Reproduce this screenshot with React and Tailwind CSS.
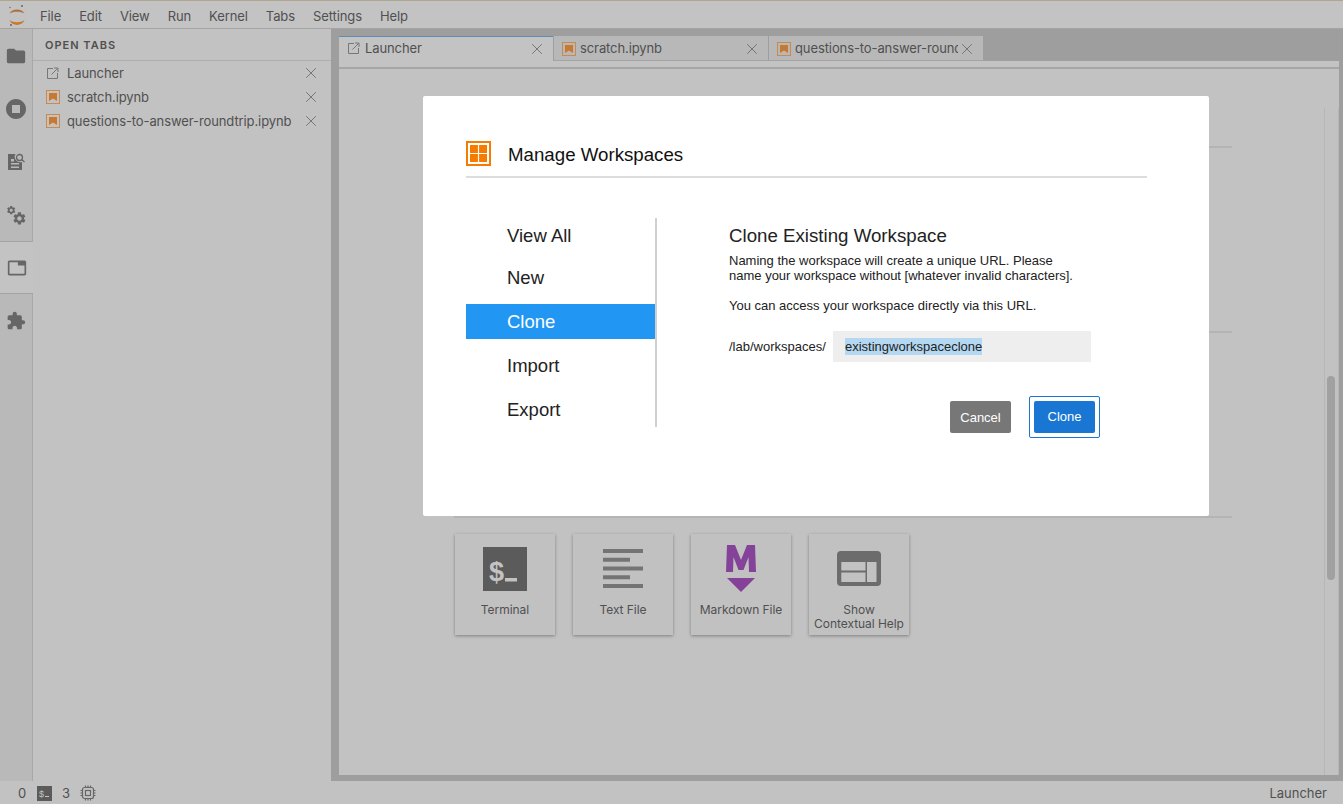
import { X } from 'lucide-react';

const UI = { fontFamily: 'Inter, "Liberation Sans", sans-serif' };

const menus = ['File', 'Edit', 'View', 'Run', 'Kernel', 'Tabs', 'Settings', 'Help'];

const Icon = ({ d, size = 24, className = '' }) => (
  <svg width={size} height={size} viewBox="0 0 24 24" fill="currentColor" className={className}>
    <path d={d} />
  </svg>
);

const gear = 'M19.14 12.94c.04-.3.06-.61.06-.94 0-.32-.02-.64-.07-.94l2.03-1.58a.49.49 0 0 0 .12-.61l-1.92-3.32a.488.488 0 0 0-.59-.22l-2.39.96c-.5-.38-1.03-.7-1.62-.94l-.36-2.54a.484.484 0 0 0-.48-.41h-3.84c-.24 0-.43.17-.47.41l-.36 2.54c-.59.24-1.13.57-1.62.94l-2.39-.96c-.22-.08-.47 0-.59.22L2.74 8.87c-.12.21-.08.47.12.61l2.03 1.58c-.05.3-.09.63-.09.94s.02.64.07.94l-2.03 1.58a.49.49 0 0 0-.12.61l1.92 3.32c.12.22.37.29.59.22l2.39-.96c.5.38 1.03.7 1.62.94l.36 2.54c.05.24.24.41.48.41h3.84c.24 0 .44-.17.47-.41l.36-2.54c.59-.24 1.13-.56 1.62-.94l2.39.96c.22.08.47 0 .59-.22l1.92-3.32c.12-.22.07-.47-.12-.61l-2.01-1.58zM12 15.6c-1.98 0-3.6-1.62-3.6-3.6s1.62-3.6 3.6-3.6 3.6 1.62 3.6 3.6-1.62 3.6-3.6 3.6z';

const JupyterLogo = () => (
  <svg width="20" height="24" viewBox="0 0 20 24">
    <path d="M3.5 10.5C6 5 16 5 18.5 10.5C15 8 7 8 3.5 10.5Z" fill="#b0703a" />
    <path d="M3.5 17C6 23.5 16 23.5 18.5 17C15 20 7 20 3.5 17Z" fill="#c9782f" />
    <circle cx="16" cy="3" r="1" fill="#666" />
    <circle cx="4" cy="4.5" r="0.7" fill="#666" />
    <circle cx="5" cy="22" r="1" fill="#666" />
  </svg>
);

const NotebookIcon = () => (
  <svg width="14" height="14" viewBox="0 0 14 14">
    <rect x="0.5" y="0.5" width="13" height="13" fill="none" stroke="#c98a4f" />
    <path d="M3 3H11V11L7 8.5L3 11Z" fill="#c8782f" />
  </svg>
);

const LauncherIcon = () => (
  <svg width="13" height="13" viewBox="0 0 13 13" fill="none" stroke="#777" strokeWidth="1">
    <path d="M7 1.5H1.5V11.5H11.5V6" />
    <path d="M5.5 7.5L11.5 1.5M8 1H12V5" />
  </svg>
);

const SideIcon = ({ children, active }) => (
  <div
    className={`h-[53px] flex items-center justify-center text-[#666] ${
      active ? 'bg-[#c3c3c3] border-y border-[#a4a4a4] w-[33px]' : 'w-[32px]'
    }`}
  >
    {children}
  </div>
);

const OpenTab = ({ icon, label }) => (
  <div className="h-6 flex items-center pl-[13px] pr-[11px]">
    <span className="w-[21px] flex items-center">{icon}</span>
    <span className="flex-1 pt-[2px] text-[13px] tracking-[-0.1px] text-[#505050] truncate">{label}</span>
    <X size={18} strokeWidth={1.1} className="text-[#666]" />
  </div>
);

const DocTab = ({ icon, label, active }) => (
  <div
    className={`w-[214px] shrink-0 flex items-center pl-2 pr-[7px] mr-px ${
      active ? 'h-[26px] pb-[2px] bg-[#c3c3c3] border-t border-[#5d8db5]' : 'h-[25px] pt-[2px] bg-[#b8b8b8] border-b border-[#a4a4a4]'
    }`}
  >
    <span className="w-[18px] flex items-center">{icon}</span>
    <span className="flex-1 text-[13px] tracking-[-0.1px] text-[#505050] overflow-hidden whitespace-nowrap">{label}</span>
    <X size={18} strokeWidth={1.1} className="text-[#666] shrink-0" />
  </div>
);

const LauncherCard = ({ label, children }) => (
  <div className="w-[100px] h-[101px] bg-[#c1c1c1] shadow-[0_1px_3px_rgba(0,0,0,0.35)] flex flex-col items-center">
    <div className="h-[66px] pt-[3px] flex items-center justify-center">{children}</div>
    <div className="text-[12px] leading-[14px] tracking-[-0.05px] text-[#505050] text-center mt-[3px] whitespace-nowrap">{label}</div>
  </div>
);

const navItems = [
  { label: 'View All', cls: 'h-[36px] mb-[5px]' },
  { label: 'New', cls: 'h-[38px] mb-[7px]' },
  { label: 'Clone', cls: 'h-[35px] mb-[9px] bg-[#2196f3] text-white' },
  { label: 'Import', cls: 'h-[35px] mb-[9px]' },
  { label: 'Export', cls: 'h-[35px]' },
];

const WorkspaceModal = () => (
  <div
    className="absolute left-[423px] top-[96px] w-[786px] h-[420px] bg-white rounded-[2px] pl-[43px] pr-[62px] pt-[45px]"
    style={{ fontFamily: '"Liberation Sans", Arial, sans-serif' }}
  >
    <div className="h-[37px] border-b-2 border-[#dddddd] flex items-start">
      <svg width="25" height="25" viewBox="0 0 25 25" className="mr-[17px]">
        <rect x="1" y="1" width="23" height="23" fill="none" stroke="#f57c00" strokeWidth="2" />
        <path d="M4 4H11.9V11.9H4ZM13.1 4H21V11.9H13.1ZM4 13.1H11.9V21H4ZM13.1 13.1H21V21H13.1Z" fill="#f57c00" />
      </svg>
      <h1 className="text-[18.7px] leading-[28px] text-[#111] font-normal">Manage Workspaces</h1>
    </div>
    <div className="flex mt-[40px]">
      <div className="w-[191px] h-[209px] border-r-2 border-[#d0d0d0] text-[18.5px] text-[#222]">
        {navItems.map(item => (
          <div key={item.label} className={`${item.cls} w-[189px] pl-[41px] flex items-center`}>
            {item.label}
          </div>
        ))}
      </div>
      <div className="ml-[72px] flex-1">
        <h2 className="text-[18.7px] leading-[36px] text-[#222] font-normal">Clone Existing Workspace</h2>
        <p className="text-[13px] leading-[15px] text-[#222] -mt-[1px]">
          Naming the workspace will create a unique URL. Please
          <br />
          name your workspace without [whatever invalid characters].
        </p>
        <p className="text-[13px] leading-[15px] text-[#222] mt-[15px]">You can access your workspace directly via this URL.</p>
        <div className="flex items-center mt-[18px]">
          <span className="text-[13px] text-[#222] w-[104px]">/lab/workspaces/</span>
          <div className="w-[258px] h-[31px] bg-[#eeeeee] pl-3 flex items-center">
            <span className="text-[13px] leading-[17px] text-[#222] bg-[#b4d8f1]">existingworkspaceclone</span>
          </div>
        </div>
        <div className="flex justify-end items-center w-[371px] mt-[34px]">
          <button className="w-[61px] h-8 bg-[#777777] text-white text-[13px] rounded-[2px] mr-[18px] pt-[1px]">Cancel</button>
          <div className="border border-[#1976d2] p-1 rounded-[2px]">
            <button className="block w-[61px] h-8 bg-[#1976d2] text-white text-[13px] rounded-[2px]">Clone</button>
          </div>
        </div>
      </div>
    </div>
  </div>
);

export default function App() {
  return (
    <div className="relative w-[1343px] h-[804px] overflow-hidden bg-[#c2c2c2] flex flex-col" style={UI}>
      {/* menu bar */}
      <div className="h-[29px] shrink-0 flex items-center pt-[5px] bg-[#c3c3c3] border-t border-[#b0a68f] border-b border-b-[#a4a4a4]">
        <div className="w-[31px] -mt-[5px] flex justify-center">
          <JupyterLogo />
        </div>
        {menus.map(m => (
          <span key={m} className="px-[9px] text-[13px] tracking-[-0.1px] text-[#505050]">{m}</span>
        ))}
      </div>

      <div className="flex-1 flex min-h-0">
        {/* activity bar */}
        <div className="w-[33px] shrink-0 bg-[#b9b9b9] border-r border-[#a8a8a8] flex flex-col">
          <SideIcon><Icon size={22} d="M10 4H4c-1.1 0-1.99.9-1.99 2L2 18c0 1.1.9 2 2 2h16c1.1 0 2-.9 2-2V8c0-1.1-.9-2-2-2h-8l-2-2z" /></SideIcon>
          <SideIcon><Icon size={24} d="M12 2C6.48 2 2 6.48 2 12s4.48 10 10 10 10-4.48 10-10S17.52 2 12 2zm4 14H8V8h8v8z" /></SideIcon>
          <SideIcon>
            <svg width="20" height="20" viewBox="0 0 20 20" fill="currentColor">
              <path d="M2 2H9.5A5.5 5.5 0 0 0 16 10V18H2ZM5 11V12.5H13V11ZM5 14.5V16H13V14.5ZM5 7V9.5H8V7Z" />
              <circle cx="13.5" cy="5.5" r="3" fill="none" stroke="currentColor" strokeWidth="1.3" />
              <path d="M15.5 7.5L18.5 10" stroke="currentColor" strokeWidth="1.3" />
            </svg>
          </SideIcon>
          <SideIcon>
            <svg width="20" height="20" viewBox="0 0 24 24" fill="currentColor">
              <g transform="translate(7 7) scale(0.76)"><path d={gear} /></g>
              <g transform="scale(0.52)"><path d={gear} /></g>
            </svg>
          </SideIcon>
          <SideIcon active><Icon size={20} d="M21 3H3c-1.1 0-2 .9-2 2v14c0 1.1.9 2 2 2h18c1.1 0 2-.9 2-2V5c0-1.1-.9-2-2-2zm0 16H3V5h10v4h8v10z" /></SideIcon>
          <SideIcon><Icon size={20} d="M20.5 11H19V7c0-1.1-.9-2-2-2h-4V3.5C13 2.12 11.88 1 10.5 1S8 2.12 8 3.5V5H4c-1.1 0-1.99.9-1.99 2v3.8H3.5c1.49 0 2.7 1.21 2.7 2.7s-1.21 2.7-2.7 2.7H2V20c0 1.1.9 2 2 2h3.8v-1.5c0-1.49 1.21-2.7 2.7-2.7 1.49 0 2.7 1.21 2.7 2.7V22H17c1.1 0 2-.9 2-2v-4h1.5c1.38 0 2.5-1.12 2.5-2.5S21.88 11 20.5 11z" /></SideIcon>
        </div>

        {/* open tabs panel */}
        <div className="w-[298px] shrink-0 bg-[#c2c2c2]">
          <div className="h-[32px] pt-[2px] border-b border-[#aeaeae] pl-3 flex items-center text-[11px] font-semibold tracking-[1px] text-[#505050]">
            OPEN TABS
          </div>
          <OpenTab icon={<LauncherIcon />} label="Launcher" />
          <OpenTab icon={<NotebookIcon />} label="scratch.ipynb" />
          <OpenTab icon={<NotebookIcon />} label="questions-to-answer-roundtrip.ipynb" />
        </div>

        {/* main area */}
        <div className="flex-1 min-w-0 bg-[#9e9e9e] pl-2 pr-[4px] pb-[6px] flex flex-col">
          <div className="h-[32px] shrink-0 flex items-start pt-[7px]">
            <DocTab active icon={<LauncherIcon />} label="Launcher" />
            <DocTab icon={<NotebookIcon />} label="scratch.ipynb" />
            <DocTab icon={<NotebookIcon />} label="questions-to-answer-roundtrip.ipynb" />
          </div>
          <div className="h-[8px] shrink-0 bg-[#c3c3c3] border-b-2 border-[#a6a6a6]" />
          <div className="flex-1 min-h-0 bg-[#c2c2c2] flex">
            <div className="flex-1 pl-[115px] pr-[92px]">
              <div className="h-[79px] border-b-2 border-[#b4b4b4]" />
              <div className="h-[185px] border-b-2 border-[#b4b4b4]" />
              <div className="h-[185px] border-b-2 border-[#b4b4b4]" />
              <div className="flex gap-[18px] mt-4 ml-px">
                <LauncherCard label="Terminal">
                  <svg width="44" height="44" viewBox="0 0 44 44">
                    <rect width="44" height="44" fill="#5b5b5b" />
                    <text x="6" y="34" fontSize="27" fontWeight="700" fontFamily='"Liberation Sans", sans-serif' fill="#c2c2c2">$</text>
                    <rect x="22" y="31" width="12" height="3.5" fill="#c2c2c2" />
                  </svg>
                </LauncherCard>
                <LauncherCard label="Text File">
                  <svg width="40" height="40" viewBox="0 0 40 40" fill="#747474">
                    <path d="M0 0H40V4H0ZM0 8.7H27V12.7H0ZM0 17.5H40V21.5H0ZM0 26.2H27V30.2H0ZM0 35H40V39H0Z" />
                  </svg>
                </LauncherCard>
                <LauncherCard label="Markdown File">
                  <svg width="30" height="48" viewBox="0 0 30 48" fill="#844298">
                    <path d="M1 0H9L15 15L21 0H29L30 27H23L22.5 12L17.5 25H12.5L7.5 12L7 27H0Z" />
                    <path d="M1 33H29L15 47Z" />
                  </svg>
                </LauncherCard>
                <LauncherCard label={<>Show<br />Contextual Help</>}>
                  <svg width="44" height="36" viewBox="0 0 44 36">
                    <rect width="44" height="35" rx="4" fill="#6c6c6c" />
                    <path d="M4.3 11H28.5V19.5H4.3ZM4.3 21.5H28.5V31H4.3ZM30 11H39.5V31H30Z" fill="#c2c2c2" />
                  </svg>
                </LauncherCard>
              </div>
            </div>
            <div className="w-[15px] shrink-0 mt-[39px] border-x border-[#b6b6b6] pl-[2px] pr-[2px]">
              <div className="w-[8px] h-[204px] mt-[268px] bg-[#a1a1a1] rounded-[4px]" />
            </div>
          </div>
        </div>
      </div>

      {/* status bar */}
      <div className="h-[23px] shrink-0 pt-[1px] bg-[#c2c2c2] flex items-center text-[13px] text-[#505050]">
        <span className="ml-[18px] w-[19px] pt-[1px]">0</span>
        <svg width="15" height="15" viewBox="0 0 15 15">
          <rect width="15" height="15" fill="#5b5b5b" />
          <text x="2" y="11" fontSize="9" fontFamily='"Liberation Sans", sans-serif' fill="#c2c2c2">$</text>
          <rect x="8" y="10" width="4" height="1" fill="#c2c2c2" />
        </svg>
        <span className="ml-[10px] w-[18px] pt-[1px]">3</span>
        <svg width="16" height="16" viewBox="0 0 16 16" fill="none" stroke="#666" strokeWidth="1.2">
          <rect x="2.5" y="2.5" width="11" height="11" rx="2" />
          <rect x="5.5" y="5.5" width="5" height="5" />
          <path d="M5.5 0.5V2M8 0.5V2M10.5 0.5V2M5.5 14V15.5M8 14V15.5M10.5 14V15.5M0.5 5.5H2M0.5 8H2M0.5 10.5H2M14 5.5H15.5M14 8H15.5M14 10.5H15.5" />
        </svg>
        <span className="ml-auto mr-4 pt-[1px]">Launcher</span>
      </div>

      <WorkspaceModal />
    </div>
  );
}
